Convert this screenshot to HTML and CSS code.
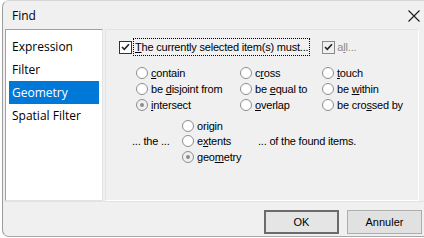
FILE: index.html
```html
<!DOCTYPE html>
<html>
<head>
<meta charset="utf-8">
<link rel="stylesheet" href="styles.css">
</head>
<body>
<div class="window">
  <div class="titlebar">
    <span class="title">Find</span>
    <svg class="close" width="12" height="12" viewBox="0 0 12 12"><path d="M0.5 0.5 L11.5 11.5 M11.5 0.5 L0.5 11.5" stroke="#1a1a1a" stroke-width="1.1" fill="none"/></svg>
  </div>
  <div class="content">
    <ul class="list">
      <li class="item">Expression</li>
      <li class="item">Filter</li>
      <li class="item selected">Geometry</li>
      <li class="item">Spatial Filter</li>
    </ul>
    <div class="panel">
      <div class="header">
        <span class="check checked"><svg width="9" height="8" viewBox="0 0 9 8"><path d="M1 4 L3.3 6.3 L8 1.3" stroke="#222" stroke-width="1.6" fill="none"/></svg></span>
        <span class="focus"><u>T</u>he currently selected item(s) must...</span>
        <span class="check checked disabled"><svg width="9" height="8" viewBox="0 0 9 8"><path d="M1 4 L3.3 6.3 L8 1.3" stroke="#222" stroke-width="1.6" fill="none"/></svg></span>
        <span class="gray">a<u>l</u>l...</span>
      </div>
      <div class="options">
        <label class="opt"><span class="radio"></span><span><u>c</u>ontain</span></label>
        <label class="opt"><span class="radio"></span><span>c<u>r</u>oss</span></label>
        <label class="opt"><span class="radio"></span><span><u>t</u>ouch</span></label>
        <label class="opt"><span class="radio"></span><span>be <u>d</u>isjoint from</span></label>
        <label class="opt"><span class="radio"></span><span>be <u>e</u>qual to</span></label>
        <label class="opt"><span class="radio"></span><span>be <u>w</u>ithin</span></label>
        <label class="opt"><span class="radio on"></span><span><u>i</u>ntersect</span></label>
        <label class="opt"><span class="radio"></span><span><u>o</u>verlap</span></label>
        <label class="opt"><span class="radio"></span><span>be cro<u>s</u>sed by</span></label>
      </div>
      <div class="lower">
        <span class="the">... the ...</span>
        <div class="targets">
          <label class="opt"><span class="radio"></span><span>ori<u>g</u>in</span></label>
          <label class="opt"><span class="radio"></span><span>e<u>x</u>tents</span></label>
          <label class="opt"><span class="radio on"></span><span>geo<u>m</u>etry</span></label>
        </div>
        <span class="found">... of the found items.</span>
      </div>
    </div>
  </div>
  <div class="footer">
    <button class="btn default">OK</button>
    <button class="btn">Annuler</button>
  </div>
</div>
</body>
</html>
```
FILE: styles.css
```css
html, body {
  margin: 0;
  padding: 0;
  background: #ffffff;
  width: 424px;
  height: 238px;
  overflow: hidden;
}
.window {
  margin-left: 2px;
  width: 430px;
  height: 237px;
  background: #f0f0f0;
  border-left: 1px solid #9c9c9c;
  border-top: 1px solid #d6d6d6;
  border-bottom: 1px solid #a8a8a8;
  border-radius: 7px 0 0 7px;
  box-sizing: border-box;
  font-family: "Liberation Sans", Arial, sans-serif;
  font-size: 11px;
  color: #000;
}
.titlebar {
  height: 28px;
  display: flex;
  align-items: center;
  padding-left: 9px;
  position: relative;
}
.title {
  font-family: "Open Sans", "Noto Sans", sans-serif;
  font-size: 12px;
  color: #000;
}
.close {
  position: absolute;
  left: 405px;
  top: 9px;
}
.content {
  display: flex;
  height: 172px;
  padding-left: 2px;
  gap: 2px;
}
.list {
  list-style: none;
  margin: 0;
  padding: 0 3px 0 3px;
  width: 98px;
  box-sizing: border-box;
  background: #fff;
  border-left: 1px solid #a0a0a0;
  border-top: 1px solid #a0a0a0;
  border-right: 1px solid #e3e3e3;
  border-bottom: 1px solid #e3e3e3;
  font-family: "Open Sans", "Noto Sans", sans-serif;
  font-size: 12px;
}
.item {
  height: 23px;
  line-height: 23px;
  padding-left: 3px;
  margin-top: 0;
}
.item:first-child {
  margin-top: 5px;
}
.item.selected {
  background: #0078d7;
  color: #fff;
}
.panel {
  width: 314px;
  box-sizing: border-box;
  border: 1px solid #fff;
  border-left-color: #e3e3e3;
  border-top-color: #e3e3e3;
  padding: 8px 0 0 13px;
  letter-spacing: -0.2px;
}
.header {
  display: flex;
  align-items: center;
  height: 18px;
}
.check {
  width: 11px;
  height: 11px;
  border: 1px solid #333;
  background: #fff;
  display: inline-flex;
  align-items: center;
  justify-content: center;
  margin-right: 2px;
}
.check.disabled {
  border-color: #8a8a8a;
  background: #f0f0f0;
}
.focus {
  outline: 1px dotted #000;
  padding: 2px 1px;
  margin-right: 13px;
}
.gray {
  color: #8a8a8a;
}
.options {
  display: grid;
  grid-template-columns: 104px 82px auto;
  grid-auto-rows: 16px;
  margin: 9px 0 0 17px;
}
.opt {
  display: flex;
  align-items: center;
  gap: 3px;
}
.radio {
  width: 10px;
  height: 10px;
  border: 1px solid #8d8d8d;
  border-radius: 50%;
  background: #fff;
  position: relative;
  flex: none;
}
.radio.on {
  background: #f0f0f0;
}
.radio.on::after {
  content: "";
  position: absolute;
  left: 3px;
  top: 3px;
  width: 4px;
  height: 4px;
  border-radius: 50%;
  background: #8d8d8d;
}
.lower {
  display: flex;
  align-items: center;
  margin-top: 5px;
}
.the {
  margin-left: 13px;
  width: 50px;
}
.targets {
  display: grid;
  grid-auto-rows: 15.5px;
  width: 76px;
}
.found {
  margin-left: 0;
}
.footer {
  border-top: 1px solid #e3e3e3;
  height: 36px;
  display: flex;
  align-items: center;
  padding-left: 261px;
  gap: 8px;
  padding-top: 4px;
  box-sizing: border-box;
}
.btn {
  width: 75px;
  height: 24px;
  font-family: "Liberation Sans", Arial, sans-serif;
  font-size: 11px;
  background: #e1e1e1;
  border: 1px solid #adadad;
  color: #000;
  padding: 0;
}
.btn.default {
  border: 2px solid #6b6b6b;
  background: #e5e5e5;
}
```
